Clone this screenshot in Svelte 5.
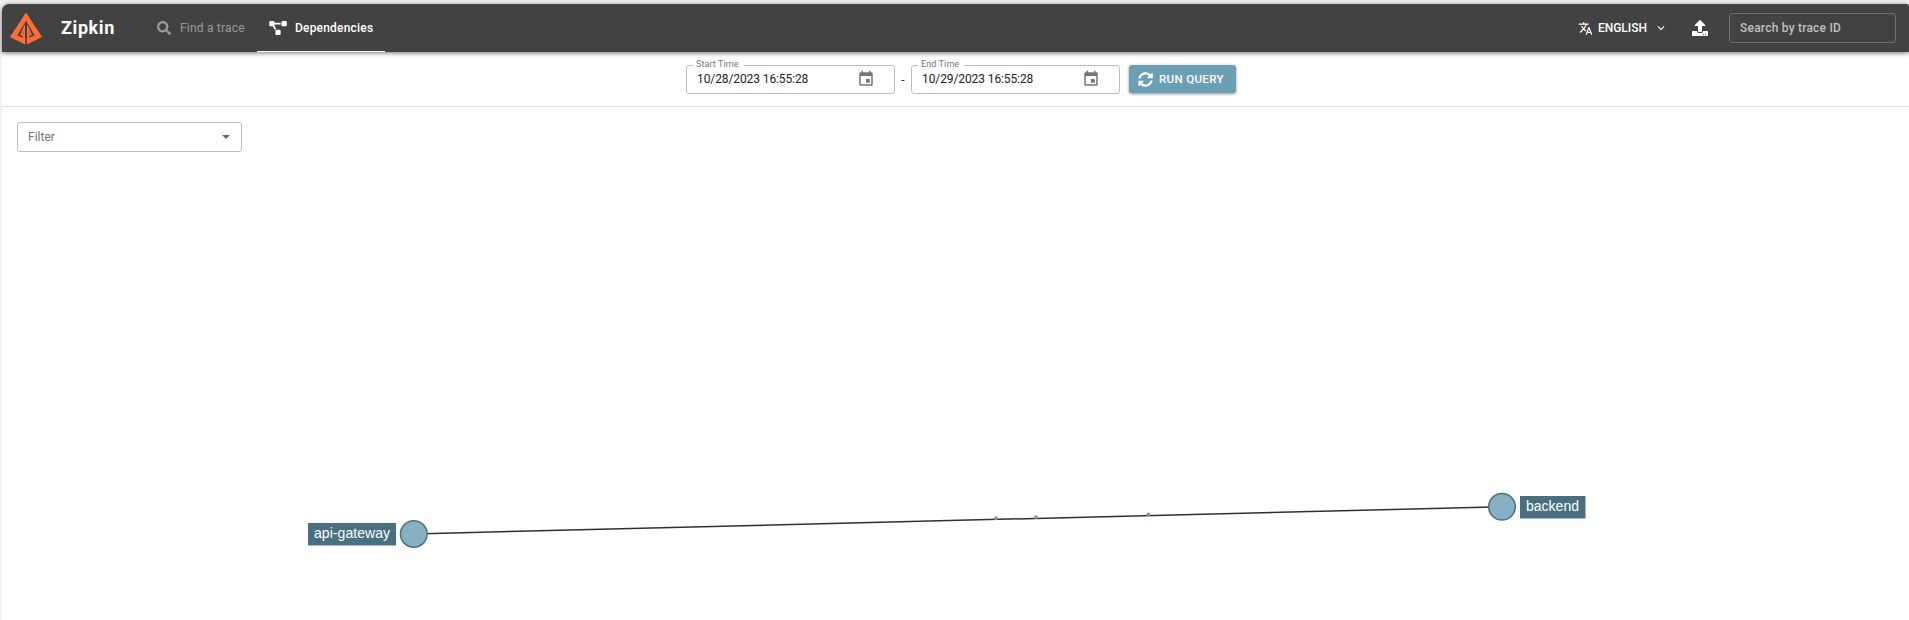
<script>
  const ranges = [
    { label: 'Start Time', value: '10/28/2023 16:55:28' },
    { label: 'End Time', value: '10/29/2023 16:55:28' },
  ];
  const particles = [[996, 518.2], [1036, 517.2], [1148.5, 514.4]];
</script>

<div class="window">
  <header>
    <svg class="logo" width="34" height="34" viewBox="9 12 34 34">
      <path fill="#ff6c37" d="M26 12.500 42 37 28 44H24L10 37Z" />
      <path fill="#424242" d="M26 20.800 34.600 35.200 30 37.500 28.300 36.500V38H23.700V36.500L22 37.500 17.400 35.200Z" />
      <path fill="#ff6c37" d="M25.100 24V44H23.300V31.500L22.400 33.300 23.300 34V36.700L20.100 34.400ZM26.900 24V44H28.700V31.500L29.600 33.300 28.700 34V36.700L31.900 34.400Z" />
      <path fill="#424242" d="M25.200 22H26.800V44H25.200Z" />
    </svg>
    <h1>Zipkin</h1>
    <nav>
      <a class="tab find" href="#find">
        <svg width="14" height="14" viewBox="0 0 512 512" fill="currentColor"><path d="M505 442.700L405.300 343c-4.500-4.500-10.600-7-17-7H372c27.600-35.300 44-79.700 44-128C416 93.100 322.900 0 208 0S0 93.100 0 208s93.100 208 208 208c48.300 0 92.700-16.400 128-44v16.300c0 6.400 2.500 12.500 7 17l99.700 99.700c9.400 9.400 24.600 9.400 33.900 0l28.300-28.300c9.400-9.400 9.400-24.600.1-34zM208 336c-70.700 0-128-57.200-128-128 0-70.700 57.200-128 128-128 70.700 0 128 57.200 128 128 0 70.700-57.200 128-128 128z"/></svg>
        <span>Find a trace</span>
      </a>
      <a class="tab deps" href="#dependencies">
        <svg width="18" height="14" viewBox="0 0 640 512" fill="currentColor"><path d="M384 320H256c-17.670 0-32 14.330-32 32v128c0 17.670 14.330 32 32 32h128c17.670 0 32-14.330 32-32V352c0-17.670-14.330-32-32-32zM192 32c0-17.670-14.330-32-32-32H32C14.330 0 0 14.330 0 32v128c0 17.670 14.330 32 32 32h95.720l73.160 128.040C211.980 300.980 232.400 288 256 288h.28L192 175.510V128h224V64H192V32zM608 0H480c-17.670 0-32 14.330-32 32v128c0 17.670 14.330 32 32 32h128c17.670 0 32-14.330 32-32V32c0-17.670-14.330-32-32-32z"/></svg>
        <span>Dependencies</span>
      </a>
    </nav>
    <button class="language">
      <svg width="15" height="15" viewBox="0 0 24 24" fill="currentColor"><path d="M12.870 15.070l-2.540-2.510.03-.03c1.740-1.940 2.980-4.170 3.710-6.530H17V4h-7V2H8v2H1v1.990h11.170C11.500 7.920 10.440 9.750 9 11.350 8.070 10.320 7.300 9.190 6.690 8h-2c.73 1.630 1.730 3.170 2.980 4.560l-5.090 5.020L4 19l5-5 3.110 3.110.76-2.040zM18.500 10h-2L12 22h2l1.120-3h4.750L21 22h2l-4.500-12zm-2.620 7l1.620-4.330L19.120 17h-3.240z"/></svg>
      <span>ENGLISH</span>
      <svg class="chevron" width="14" height="14" viewBox="0 0 24 24" fill="currentColor"><path d="M16.590 8.590L12 13.170 7.410 8.590 6 10l6 6 6-6z"/></svg>
    </button>
    <button class="upload" aria-label="Upload">
      <svg width="16" height="16" viewBox="0 0 512 512" fill="currentColor"><path d="M296 384h-80c-13.300 0-24-10.700-24-24V192h-87.700c-17.800 0-26.700-21.500-14.100-34.100L242.300 5.700c7.500-7.500 19.800-7.500 27.300 0l152.200 152.200c12.600 12.600 3.700 34.100-14.100 34.100H320v168c0 13.300-10.700 24-24 24zm216-8v112c0 13.300-10.700 24-24 24H24c-13.300 0-24-10.700-24-24V376c0-13.300 10.700-24 24-24h136v8c0 30.900 25.100 56 56 56h80c30.900 0 56-25.100 56-56v-8h136c13.300 0 24 10.700 24 24zm-124 88c0-11-9-20-20-20s-20 9-20 20 9 20 20 20 20-9 20-20zm64 0c0-11-9-20-20-20s-20 9-20 20 9 20 20 20 20-9 20-20z"/></svg>
    </button>
    <div class="search">Search by trace ID</div>
  </header>

  <section class="query">
    {#each ranges as range, i}
      {#if i}<span class="dash">-</span>{/if}
      <fieldset>
        <legend>{range.label}</legend>
        <div class="value">
          <span>{range.value}</span>
          <svg width="18" height="18" viewBox="0 0 24 24" fill="#757575"><path d="M17 12h-5v5h5v-5zM16 1v2H8V1H6v2H5c-1.110 0-1.990.9-1.990 2L3 19c0 1.100.89 2 2 2h14c1.100 0 2-.9 2-2V5c0-1.100-.9-2-2-2h-1V1h-2zm3 18H5V8h14v11z"/></svg>
        </div>
      </fieldset>
    {/each}
    <button class="run">
      <svg width="15" height="15" viewBox="0 0 512 512" fill="currentColor"><path d="M370.720 133.280C339.458 104.008 298.888 87.962 255.848 88c-77.458.068-144.328 53.178-162.791 126.850-1.344 5.363-6.122 9.150-11.651 9.150H24.103c-7.498 0-13.194-6.807-11.807-14.176C33.933 94.924 134.813 8 256 8c66.448 0 126.791 26.136 171.315 68.685L463.030 40.970C478.149 25.851 504 36.559 504 57.941V192c0 13.255-10.745 24-24 24H345.941c-21.382 0-32.090-25.851-16.971-40.971l41.750-41.749zM32 296h134.059c21.382 0 32.090 25.851 16.971 40.971l-41.750 41.750c31.262 29.273 71.835 45.319 114.876 45.280 77.418-.070 144.315-53.144 162.787-126.849 1.344-5.363 6.122-9.150 11.651-9.150h57.304c7.498 0 13.194 6.807 11.807 14.176C478.067 417.076 377.187 504 256 504c-66.448 0-126.791-26.136-171.315-68.685L48.970 471.030C33.851 486.149 8 475.441 8 454.059V320c0-13.255 10.745-24 24-24z"/></svg>
      <span>RUN QUERY</span>
    </button>
  </section>

  <main>
    <div class="filter"><span>Filter</span><i></i></div>
    <svg class="graph" width="1907" height="513" viewBox="2 107 1907 513">
      <line x1="414" y1="533.900" x2="1502" y2="506.800" stroke="#303030" stroke-width="1.500" />
      {#each particles as [x, y]}
        <circle cx={x} cy={y} r="1.900" fill="#6f9daf" />
      {/each}
      <g fill="#87b0c2" stroke="#4b7384" stroke-width="1.500">
        <circle cx="413.800" cy="534" r="13.300" />
        <circle cx="1502" cy="506.800" r="13.300" />
      </g>
      <g fill="#4a7080">
        <rect x="308" y="523" width="88" height="22.500" />
        <rect x="1520" y="496" width="65.500" height="22.500" />
      </g>
      <g class="labels">
        <text x="314" y="538" textLength="76">api-gateway</text>
        <text x="1526" y="511" textLength="53">backend</text>
      </g>
    </svg>
  </main>
</div>

<style>
  :global(body) { background: #f1f1f1; overflow: hidden; }
  * { box-sizing: border-box; }
  .window {
    height: 616px;
    margin: 4px 0 0 2px;
    background: #fff;
    border-radius: 7px 0 0;
    font-family: Roboto, sans-serif;
    font-size: 12px;
  }
  header {
    position: relative;
    display: flex;
    align-items: center;
    height: 48px;
    padding-right: 13px;
    background: #424242;
    color: #fff;
    border-radius: 7px 3px 0 0;
    box-shadow: 0 1px 5px rgb(0 0 0 / 55%);
  }
  .logo { margin: 2px 0 0 7px; }
  h1 { width: 88px; margin: 0 0 0 18px; font-size: 18px; line-height: 24px; font-weight: 700; letter-spacing: .6px; }
  nav { display: flex; align-self: stretch; }
  .tab { display: flex; align-items: center; color: #fff; text-decoration: none; }
  .find { width: 108px; padding-left: 8px; gap: 9px; color: #9b9b9b; letter-spacing: .2px; }
  .deps { width: 128px; padding-left: 12px; gap: 8px; font-weight: 500; letter-spacing: .2px; border-bottom: 1px solid #fff; }
  button { display: flex; align-items: center; padding: 0; border: 0; background: none; color: #fff; font: 500 12px Roboto, sans-serif; }
  .language { gap: 5px; margin-left: auto; }
  .chevron { margin-left: 2px; }
  .upload { margin: 0 21px 0 24px; }
  .search {
    width: 167px;
    height: 30px;
    padding-left: 10px;
    border: 1px solid #707070;
    border-radius: 3px;
    color: #c0c0c0;
    line-height: 28px;
    font-weight: 500;
    letter-spacing: .22px;
  }
  .query {
    display: flex;
    align-items: flex-start;
    height: 55px;
    padding: 8px 0 0 684px;
    border-bottom: 1px solid #dedede;
  }
  fieldset { width: 209px; height: 34px; margin: 0; padding: 0 9px; border: 1px solid #bdbdbd; border-radius: 3px; min-width: 0; }
  legend { height: 10px; padding: 0 5px 0 3px; margin-left: -3px; color: #757575; font-size: 9px; line-height: 8px; letter-spacing: .1px; }
  .value { display: flex; align-items: center; justify-content: space-between; height: 17px; padding: 0 10px 0 1px; color: #212121; letter-spacing: -.1px; }
  .dash { width: 16px; padding-top: 13px; color: #333; text-align: center; }
  .run {
    width: 107px;
    height: 28px;
    margin: 5px 0 0 9px;
    padding-left: 9px;
    gap: 6px;
    background: #6b9fb5;
    border-radius: 3px;
    box-shadow: 0 1px 3px rgb(0 0 0 / 45%);
    font-size: 11.500px;
    letter-spacing: .35px;
  }
  main { display: grid; height: 513px; }
  .graph, .filter { grid-area: 1 / 1; }
  .filter {
    display: flex;
    align-items: center;
    justify-content: space-between;
    width: 225px;
    height: 30px;
    margin: 15px;
    padding: 0 11px 0 10px;
    border: 1px solid #bdbdbd;
    border-radius: 3px;
    color: #757575;
  }
  i { border: 4px solid transparent; border-top-color: #666; border-bottom: 0; }
  .graph { display: block; }
  .labels { font: 14px "Liberation Sans", Arial, sans-serif; fill: #fff; }
</style>
